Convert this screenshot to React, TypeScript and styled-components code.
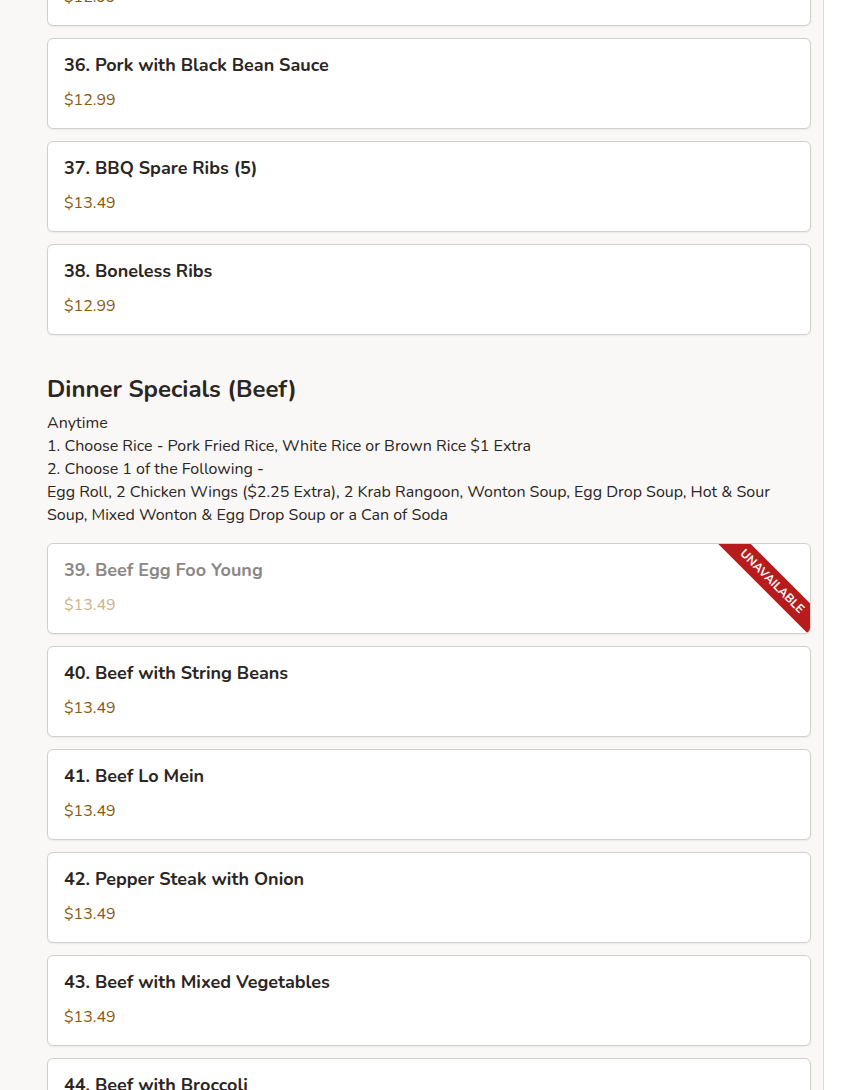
import React from "react";
import styled, { createGlobalStyle } from "styled-components";

const Global = createGlobalStyle`
  html, body { margin: 0; padding: 0; background: #ffffff; }
  body { font-family: "Nunito", "Lato", "Noto Sans", sans-serif; overflow: hidden; }
  * { box-sizing: border-box; }
`;

const Page = styled.div`
  width: 824px;
  height: 1090px;
  overflow: hidden;
  background: #f9f8f6;
  border-right: 1px solid #dcdcdc;
`;

const Inner = styled.div`
  margin-top: -65px;
  padding: 0 12px 0 47px;
  display: flex;
  flex-direction: column;
`;

const Section = styled.section`
  display: flex;
  flex-direction: column;
  margin-bottom: 38px;
`;

const Heading = styled.h2`
  margin: 0 0 7px;
  font-size: 24px;
  line-height: 32px;
  font-weight: 700;
  color: #2b2523;
`;

const Description = styled.div`
  margin-bottom: 16px;
  font-size: 16px;
  line-height: 23px;
  color: #2b2523;
`;

const List = styled.div`
  display: flex;
  flex-direction: column;
  gap: 12px;
`;

const Card = styled.div`
  position: relative;
  overflow: hidden;
  height: 91px;
  padding: 14px 16px 16px;
  background: #ffffff;
  border: 1px solid #d2d0cd;
  border-radius: 6px;
  box-shadow: 0 1px 2px rgba(0, 0, 0, 0.06);
  display: flex;
  flex-direction: column;
`;

const Title = styled.div<{ $disabled?: boolean }>`
  font-size: 18px;
  line-height: 24px;
  font-weight: 700;
  color: ${(p) => (p.$disabled ? "#8b8886" : "#2b2523")};
  margin-bottom: 12px;
`;

const Price = styled.div<{ $disabled?: boolean }>`
  font-size: 16px;
  line-height: 22px;
  color: ${(p) => (p.$disabled ? "#c9b58f" : "#8a5a12")};
`;

const Ribbon = styled.div`
  position: absolute;
  top: 26px;
  right: -37px;
  width: 150px;
  height: 23px;
  background: #b71c1c;
  color: #ffffff;
  font-size: 12px;
  font-weight: 700;
  letter-spacing: 0.1px;
  line-height: 23px;
  text-align: center;
  transform: rotate(45deg);
`;

type Item = { name: string; price: string; unavailable?: boolean };

const MenuCard = ({ item }: { item: Item }) => (
  <Card>
    <Title $disabled={item.unavailable}>{item.name}</Title>
    <Price $disabled={item.unavailable}>{item.price}</Price>
    {item.unavailable && <Ribbon>UNAVAILABLE</Ribbon>}
  </Card>
);

const pork: Item[] = [
  { name: "35. Pork with Mixed Vegetables", price: "$12.99" },
  { name: "36. Pork with Black Bean Sauce", price: "$12.99" },
  { name: "37. BBQ Spare Ribs (5)", price: "$13.49" },
  { name: "38. Boneless Ribs", price: "$12.99" },
];

const beef: Item[] = [
  { name: "39. Beef Egg Foo Young", price: "$13.49", unavailable: true },
  { name: "40. Beef with String Beans", price: "$13.49" },
  { name: "41. Beef Lo Mein", price: "$13.49" },
  { name: "42. Pepper Steak with Onion", price: "$13.49" },
  { name: "43. Beef with Mixed Vegetables", price: "$13.49" },
  { name: "44. Beef with Broccoli", price: "$13.49" },
];

export default function App() {
  return (
    <>
      <Global />
      <Page>
        <Inner>
          <Section>
            <List>
              {pork.map((it) => (
                <MenuCard key={it.name} item={it} />
              ))}
            </List>
          </Section>
          <Section>
            <Heading>Dinner Specials (Beef)</Heading>
            <Description>
              Anytime
              <br />
              1. Choose Rice - Pork Fried Rice, White Rice or Brown Rice $1 Extra
              <br />
              2. Choose 1 of the Following -
              <br />
              Egg Roll, 2 Chicken Wings ($2.25 Extra), 2 Krab Rangoon, Wonton Soup, Egg Drop Soup, Hot &amp; Sour Soup, Mixed Wonton &amp; Egg Drop Soup or a Can of Soda
            </Description>
            <List>
              {beef.map((it) => (
                <MenuCard key={it.name} item={it} />
              ))}
            </List>
          </Section>
        </Inner>
      </Page>
    </>
  );
}
